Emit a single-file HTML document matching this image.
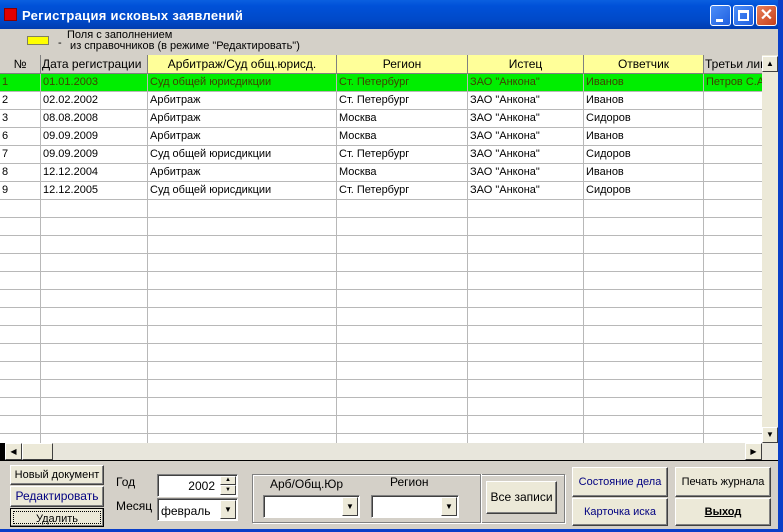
<!DOCTYPE html>
<html><head><meta charset="utf-8"><style>
*{box-sizing:border-box;margin:0;padding:0}
body{width:783px;height:532px;overflow:hidden;background:#d4d0c8;font-family:"Liberation Sans",sans-serif;font-size:11px;position:relative}
.abs{position:absolute}
#title{left:0;top:0;width:783px;height:29px;background:linear-gradient(#0a5fe0,#0051d8 20%,#0049c8 70%,#003cb0);}
#title .t{left:22px;top:8px;color:#fff;font-weight:bold;font-size:13px;letter-spacing:0.3px}
.tb{top:5px;width:21px;height:21px;border:1px solid #fff;border-radius:3px;background:linear-gradient(135deg,#4c8ef8,#1f5fe0)}
#rb{right:0;top:0;width:5px;height:532px;background:#0a3fc8}
#bb{left:0;top:529px;width:783px;height:3px;background:#0a3fc8}
.grid{left:0;top:55px;width:763px;height:388px;background:#fff;overflow:hidden}
.hd{top:0;height:19px;border-right:1px solid #808080;border-bottom:1px solid #808080;font-size:12px;text-align:center;line-height:19px}
.cell{height:18px;border-right:1px solid #b8b8b8;border-bottom:1px solid #b8b8b8;line-height:17px;padding-left:2px;font-size:11px;white-space:nowrap;overflow:hidden}
.btn{background:#ece9d8;border:1px solid #fff;border-right-color:#404040;border-bottom-color:#404040;box-shadow:inset -1px -1px #808080;text-align:center;font-size:11px}
.sunk{background:#fff;border:1px solid #808080;border-right-color:#fff;border-bottom-color:#fff;box-shadow:inset 1px 1px #404040}
.arr{background:#ece9d8;border:1px solid #fff;border-right-color:#404040;border-bottom-color:#404040;font-size:8px;text-align:center}
</style></head><body>
<div id="title" class="abs">
 <div class="abs" style="left:4px;top:8px;width:13px;height:13px;background:#e00000;border:1px solid #800"></div>
 <div class="abs t">Регистрация исковых заявлений</div>
 <div class="abs tb" style="left:710px"><div class="abs" style="left:5px;top:13px;width:7px;height:3px;background:#fff"></div></div>
 <div class="abs tb" style="left:733px"><div class="abs" style="left:4px;top:4px;width:11px;height:11px;border:2px solid #fff;border-top-width:3px"></div></div>
 <div class="abs tb" style="left:756px;background:linear-gradient(135deg,#e8805a,#c8401a);color:#fff;font-size:16px;font-weight:bold;text-align:center;line-height:19px">✕</div>
</div>
<div id="rb" class="abs"></div>
<div class="abs" style="left:27px;top:36px;width:22px;height:9px;background:#ffff00;border:1px solid #808060"></div>
<div class="abs" style="left:58px;top:37px;font-size:11px">-</div>
<div class="abs" style="left:67px;top:30px;font-size:11px;line-height:11px">Поля с заполнением<br>&nbsp;из справочников (в режиме "Редактировать")</div>

<div class="abs grid">
 <div class="abs hd" style="left:0;width:41px;background:#d4d0c8">№</div>
 <div class="abs hd" style="left:41px;width:107px;background:#d4d0c8;text-align:left;padding-left:1px">Дата регистрации</div>
 <div class="abs hd" style="left:148px;width:189px;background:#ffff99">Арбитраж/Суд общ.юрисд.</div>
 <div class="abs hd" style="left:337px;width:131px;background:#ffff99">Регион</div>
 <div class="abs hd" style="left:468px;width:116px;background:#ffff99">Истец</div>
 <div class="abs hd" style="left:584px;width:120px;background:#ffff99">Ответчик</div>
 <div class="abs hd" style="left:704px;width:60px;background:#d4d0c8;text-align:left;padding-left:1px;white-space:nowrap;overflow:hidden">Третьи лица</div>
 <div class="abs" style="left:0;top:19px;width:763px">
  <div style="display:flex;background:#00ee00;color:#404000"><div class="cell" style="width:41px">1</div><div class="cell" style="width:107px">01.01.2003</div><div class="cell" style="width:189px">Суд общей юрисдикции</div><div class="cell" style="width:131px">Ст. Петербург</div><div class="cell" style="width:116px">ЗАО "Анкона"</div><div class="cell" style="width:120px">Иванов</div><div class="cell" style="width:59px">Петров С.А.</div></div>
  <div style="display:flex"><div class="cell" style="width:41px">2</div><div class="cell" style="width:107px">02.02.2002</div><div class="cell" style="width:189px">Арбитраж</div><div class="cell" style="width:131px">Ст. Петербург</div><div class="cell" style="width:116px">ЗАО "Анкона"</div><div class="cell" style="width:120px">Иванов</div><div class="cell" style="width:59px"></div></div>
  <div style="display:flex"><div class="cell" style="width:41px">3</div><div class="cell" style="width:107px">08.08.2008</div><div class="cell" style="width:189px">Арбитраж</div><div class="cell" style="width:131px">Москва</div><div class="cell" style="width:116px">ЗАО "Анкона"</div><div class="cell" style="width:120px">Сидоров</div><div class="cell" style="width:59px"></div></div>
  <div style="display:flex"><div class="cell" style="width:41px">6</div><div class="cell" style="width:107px">09.09.2009</div><div class="cell" style="width:189px">Арбитраж</div><div class="cell" style="width:131px">Москва</div><div class="cell" style="width:116px">ЗАО "Анкона"</div><div class="cell" style="width:120px">Иванов</div><div class="cell" style="width:59px"></div></div>
  <div style="display:flex"><div class="cell" style="width:41px">7</div><div class="cell" style="width:107px">09.09.2009</div><div class="cell" style="width:189px">Суд общей юрисдикции</div><div class="cell" style="width:131px">Ст. Петербург</div><div class="cell" style="width:116px">ЗАО "Анкона"</div><div class="cell" style="width:120px">Сидоров</div><div class="cell" style="width:59px"></div></div>
  <div style="display:flex"><div class="cell" style="width:41px">8</div><div class="cell" style="width:107px">12.12.2004</div><div class="cell" style="width:189px">Арбитраж</div><div class="cell" style="width:131px">Москва</div><div class="cell" style="width:116px">ЗАО "Анкона"</div><div class="cell" style="width:120px">Иванов</div><div class="cell" style="width:59px"></div></div>
  <div style="display:flex"><div class="cell" style="width:41px">9</div><div class="cell" style="width:107px">12.12.2005</div><div class="cell" style="width:189px">Суд общей юрисдикции</div><div class="cell" style="width:131px">Ст. Петербург</div><div class="cell" style="width:116px">ЗАО "Анкона"</div><div class="cell" style="width:120px">Сидоров</div><div class="cell" style="width:59px"></div></div>
 </div>
 <div class="abs" style="left:0;top:145px;width:763px;height:250px;background:
  repeating-linear-gradient(to bottom,transparent 0 17px,#b8b8b8 17px 18px),#fff"></div>
 <div class="abs" style="left:40px;top:145px;width:1px;height:250px;background:#b8b8b8"></div>
 <div class="abs" style="left:147px;top:145px;width:1px;height:250px;background:#b8b8b8"></div>
 <div class="abs" style="left:336px;top:145px;width:1px;height:250px;background:#b8b8b8"></div>
 <div class="abs" style="left:467px;top:145px;width:1px;height:250px;background:#b8b8b8"></div>
 <div class="abs" style="left:583px;top:145px;width:1px;height:250px;background:#b8b8b8"></div>
 <div class="abs" style="left:703px;top:145px;width:1px;height:250px;background:#b8b8b8"></div>
</div>
<!-- vertical scrollbar -->
<div class="abs" style="left:762px;top:55px;width:16px;height:388px;background:#ece9d8"></div>
<div class="abs arr" style="left:762px;top:56px;width:16px;height:16px;line-height:14px">▲</div>
<div class="abs arr" style="left:762px;top:427px;width:16px;height:16px;line-height:14px">▼</div>
<!-- horizontal scrollbar -->
<div class="abs" style="left:0;top:443px;width:778px;height:17px;background:#e8e6dc"></div>
<div class="abs" style="left:0;top:443px;width:5px;height:17px;background:#000"></div>
<div class="abs arr" style="left:5px;top:443px;width:17px;height:17px;line-height:15px">◀</div>
<div class="abs arr" style="left:22px;top:443px;width:31px;height:17px"></div>
<div class="abs arr" style="left:745px;top:443px;width:17px;height:17px;line-height:15px">▶</div>
<div class="abs" style="left:0;top:460px;width:778px;height:1px;background:#000"></div>

<!-- bottom panel -->
<div class="abs btn" style="left:10px;top:465px;width:94px;height:20px;line-height:18px">Новый документ</div>
<div class="abs btn" style="left:10px;top:486px;width:94px;height:21px;line-height:19px;color:#000080;font-size:12px">Редактировать</div>
<div class="abs btn" style="left:10px;top:508px;width:94px;height:19px;border:1px solid #000;"><div style="margin:2px;border:1px dotted #000;height:13px;line-height:14px">Удалить</div></div>
<div class="abs" style="left:116px;top:475px;font-size:12px">Год</div>
<div class="abs" style="left:116px;top:499px;font-size:12px">Месяц</div>
<div class="abs sunk" style="left:157px;top:474px;width:81px;height:23px;font-size:12px;text-align:right;padding:4px 22px 0 0">2002</div>
<div class="abs arr" style="left:220px;top:476px;width:16px;height:9px;font-size:6px;line-height:7px">▲</div>
<div class="abs arr" style="left:220px;top:485px;width:16px;height:10px;font-size:6px;line-height:8px">▼</div>
<div class="abs sunk" style="left:157px;top:498px;width:81px;height:23px;font-size:12px;padding:5px 0 0 3px">февраль</div>
<div class="abs arr" style="left:220px;top:500px;width:16px;height:19px;line-height:17px">▼</div>
<div class="abs" style="left:252px;top:474px;width:313px;height:49px;border:1px solid #808080;box-shadow:1px 1px #fff, inset 1px 1px #fff"></div>
<div class="abs" style="left:480px;top:474px;width:1px;height:49px;background:#808080;box-shadow:1px 0 #fff"></div>
<div class="abs" style="left:270px;top:477px;font-size:12px">Арб/Общ.Юр</div>
<div class="abs" style="left:390px;top:475px;font-size:12px">Регион</div>
<div class="abs sunk" style="left:263px;top:495px;width:97px;height:23px"></div>
<div class="abs arr" style="left:342px;top:497px;width:16px;height:19px;line-height:17px">▼</div>
<div class="abs sunk" style="left:371px;top:495px;width:88px;height:23px"></div>
<div class="abs arr" style="left:441px;top:497px;width:16px;height:19px;line-height:17px">▼</div>
<div class="abs btn" style="left:486px;top:481px;width:71px;height:33px;line-height:31px;font-size:12px">Все записи</div>
<div class="abs btn" style="left:572px;top:467px;width:96px;height:30px;line-height:28px;color:#000080">Состояние дела</div>
<div class="abs btn" style="left:572px;top:498px;width:96px;height:28px;line-height:26px;color:#000080">Карточка иска</div>
<div class="abs btn" style="left:675px;top:467px;width:96px;height:30px;line-height:28px">Печать журнала</div>
<div class="abs btn" style="left:675px;top:498px;width:96px;height:28px;line-height:26px;font-weight:bold;text-decoration:underline">Выход</div>
<div id="bb" class="abs"></div>
</body></html>
